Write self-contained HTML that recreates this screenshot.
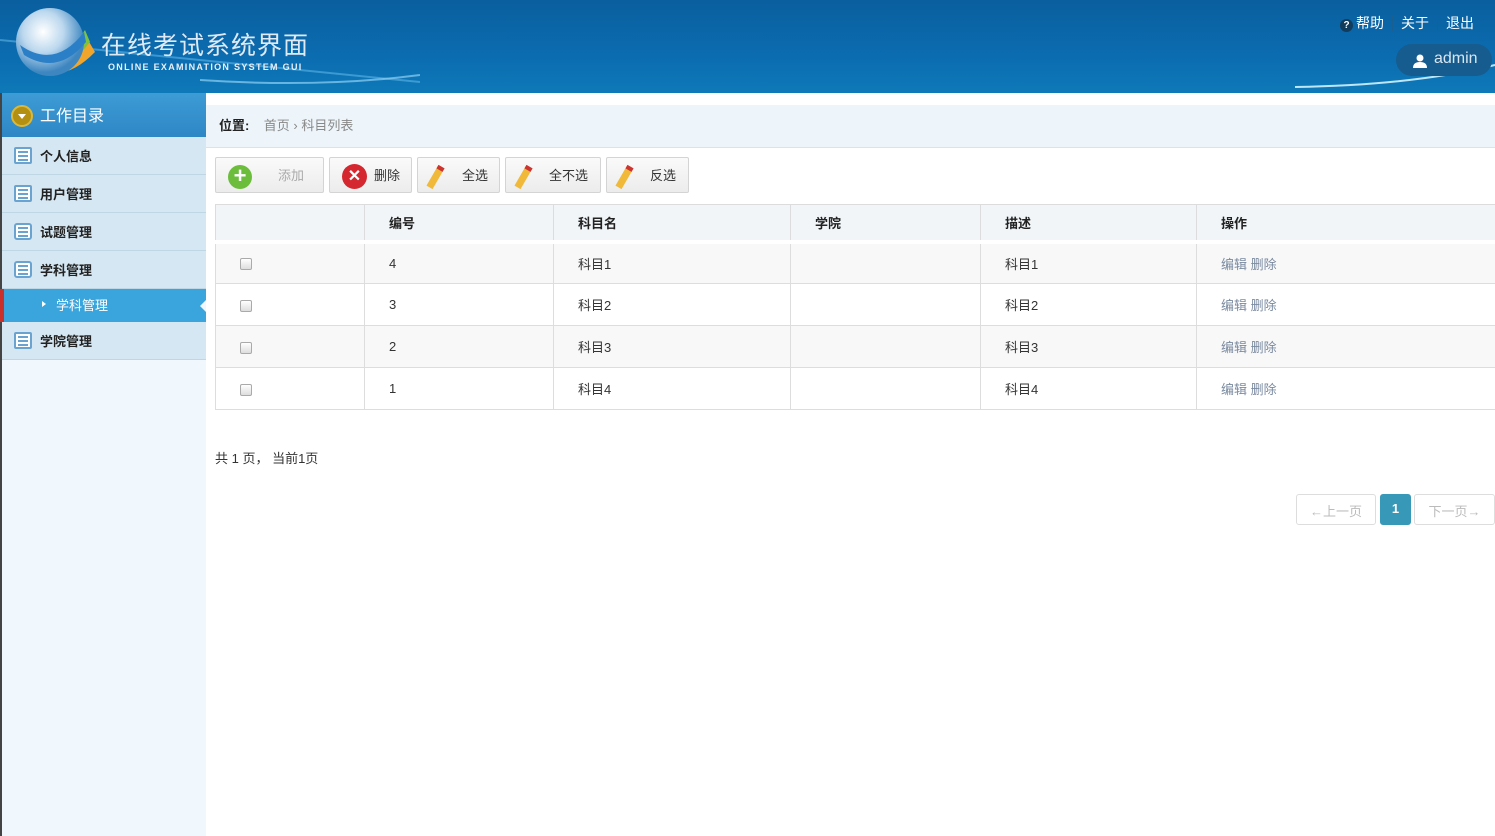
<!DOCTYPE html>
<html><head><meta charset="utf-8"><style>
*{margin:0;padding:0;box-sizing:border-box}
body{width:1495px;height:836px;overflow:hidden;font-family:"Liberation Sans","Noto Sans CJK SC",sans-serif;font-size:13px;color:#333;background:#fff;position:relative}
.hd{position:absolute;left:0;top:0;width:1495px;height:93px;background:linear-gradient(180deg,#0a5f9e 0%,#0b6cb0 60%,#0e79b8 100%);overflow:hidden}
.title{position:absolute;left:101px;top:26px;color:#dfeaf5;font-size:25px;letter-spacing:1px}
.sub{position:absolute;left:108px;top:62px;color:#e8f0f8;font-size:9px;font-weight:bold;letter-spacing:1.3px;font-family:"Liberation Sans",sans-serif}
.top{position:absolute;right:13px;top:13px;color:#fff;font-size:14px}
.top span{padding:0 8px;border-left:1px solid #1a5f90}
.top span:first-child{border:none}
.admin{position:absolute;left:1396px;top:44px;width:96px;height:32px;border-radius:16px;background:#165c8e;color:#d8e6f2;font-size:16px;padding:6px 0 0 38px}
.sb{position:absolute;left:0;top:93px;width:206px;height:743px;background:#f0f8fd;border-left:2px solid #444}
.sbh{height:44px;background:linear-gradient(#3d9bd5,#2e87c5);color:#fff;font-size:16px;padding:9px 0 0 38px;position:relative}
.it{height:38px;background:#d5e7f2;border-bottom:1px solid #bfd6e5;font-weight:bold;font-size:13px;padding:9px 0 0 38px;position:relative;color:#222}
.ic{position:absolute;left:12px;top:10px;width:18px;height:17px;border:2px solid #6aa3cf;border-radius:2px;background:#fff}
.ic:after{content:"";position:absolute;left:2px;top:2px;width:10px;height:2px;background:#6aa3cf;box-shadow:0 4px 0 #6aa3cf,0 8px 0 #6aa3cf}
.sel{height:33px;background:#3aa5dd;color:#fff;padding:6px 0 0 52px;font-size:13px;position:relative;border-left:4px solid #c9302c;margin-left:-2px}
.main{position:absolute;left:206px;top:93px;right:0}
.bc{position:absolute;left:0;top:12px;width:1289px;height:43px;background:#edf5fa;border-bottom:1px solid #d8e4ec;padding:10px 0 0 13px;color:#888}
.btn{position:absolute;top:64px;height:36px;border:1px solid #d4d4d4;border-radius:2px;background:linear-gradient(#fafafa,#ececec);font-size:13px;padding:7px 0 0 0}
table{position:absolute;left:9px;top:111px;width:1281px;border-collapse:collapse;font-size:13px}
th{height:37px;background:#f1f5f8;text-align:left;font-weight:bold;padding-left:24px;border:1px solid #dcdcdc;border-bottom:4px solid #fff;color:#222}
td{height:42px;padding-left:24px;border-left:1px solid #ddd;border-bottom:1px solid #ddd}
tr.o td{background:#f8f8f8}
.cb{display:inline-block;width:12px;height:12px;border:1px solid #aaa;border-radius:2px;background:linear-gradient(#fff,#ddd);vertical-align:middle}
.lk{color:#7a8aa0}
.pg{position:absolute;top:401px;height:31px;border:1px solid #ddd;border-radius:3px;color:#bbb;font-size:13px;padding:6px 0 0 0;text-align:center}
</style></head><body>
<div class="hd">
<svg width="420" height="93" style="position:absolute;left:0;top:0">
<defs><radialGradient id="g" cx="40%" cy="35%" r="60%"><stop offset="0" stop-color="#fff"/><stop offset=".5" stop-color="#bcd8ee"/><stop offset="1" stop-color="#3d86c0"/></radialGradient></defs>
<path d="M0 40 Q150 55 420 82" stroke="#5cb4e6" stroke-width="2" fill="none" opacity=".6"/>
<path d="M30 62 Q60 88 95 52 L88 40 Q65 75 30 55Z" fill="#f2a52b"/>
<path d="M25 54 Q60 82 90 42 L85 30 Q60 70 25 45Z" fill="#7dc242"/>
<circle cx="50" cy="42" r="34" fill="url(#g)"/>
<path d="M20 45 Q55 70 84 32 L86 42 Q58 76 24 55Z" fill="#2a7fc6"/>
<path d="M200 80 Q320 88 420 75" stroke="#8fd0f3" stroke-width="2" fill="none" opacity=".7"/>
</svg>
<div class="title">在线考试系统界面</div>
<div class="sub">ONLINE EXAMINATION SYSTEM GUI</div>
<svg width="200" height="40" style="position:absolute;right:0;top:55px"><path d="M0 32 Q120 30 200 10" stroke="#bde6fa" stroke-width="2" fill="none"/></svg>
<div class="top"><span><b style="display:inline-block;width:13px;height:13px;border-radius:50%;background:#123c5c;font-size:10px;text-align:center;line-height:13px;margin-right:3px">?</b>帮助</span><span>关于</span><span>退出</span></div>
<div class="admin"><svg width="14" height="14" style="position:absolute;left:17px;top:10px"><circle cx="7" cy="4" r="3.5" fill="#fff"/><path d="M0 14 Q0 8 7 8 Q14 8 14 14Z" fill="#fff"/></svg>admin</div>
</div>
<div class="sb">
<div class="sbh"><span style="position:absolute;left:9px;top:12px;width:22px;height:22px;border-radius:50%;background:#b38f12;border:2px solid #d9b83a"><span style="position:absolute;left:5px;top:7px;border:4px solid transparent;border-top:5px solid #fff"></span></span>工作目录</div>
<div class="it"><span class="ic"></span>个人信息</div>
<div class="it"><span class="ic"></span>用户管理</div>
<div class="it"><span class="ic" style="border-radius:3px"></span>试题管理</div>
<div class="it"><span class="ic" style="border-radius:3px"></span>学科管理</div>
<div class="sel"><span style="position:absolute;left:38px;top:12px;border:3px solid transparent;border-left:4px solid #fff"></span>学科管理<span style="position:absolute;right:0;top:11px;border:6px solid transparent;border-right:6px solid #f0f8fd"></span></div>
<div class="it"><span class="ic"></span>学院管理</div>
</div>
<div class="main">
<div class="bc"><b style="color:#222">位置:</b>&nbsp;&nbsp;&nbsp;&nbsp;首页 › 科目列表</div>
<div class="btn" style="left:9px;width:109px;color:#aaa"><span style="position:absolute;left:12px;top:7px;width:24px;height:24px;border-radius:50%;background:#6cbd3c;color:#fff;font-weight:bold;font-size:22px;line-height:22px;text-align:center">+</span><span style="margin-left:62px">添加</span></div>
<div class="btn" style="left:123px;width:83px"><span style="position:absolute;left:12px;top:6px;width:25px;height:25px;border-radius:50%;background:#d5272f;color:#fff;font-weight:bold;font-size:16px;line-height:25px;text-align:center">✕</span><span style="margin-left:44px">删除</span></div>
<div class="btn" style="left:211px;width:83px"><span style="position:absolute;left:14px;top:7px;width:7px;height:24px;background:#f0b93a;transform:rotate(30deg);border-top:4px solid #c33"></span><span style="margin-left:44px">全选</span></div>
<div class="btn" style="left:299px;width:96px"><span style="position:absolute;left:14px;top:7px;width:7px;height:24px;background:#f0b93a;transform:rotate(30deg);border-top:4px solid #c33"></span><span style="margin-left:43px">全不选</span></div>
<div class="btn" style="left:400px;width:83px"><span style="position:absolute;left:14px;top:7px;width:7px;height:24px;background:#f0b93a;transform:rotate(30deg);border-top:4px solid #c33"></span><span style="margin-left:43px">反选</span></div>
<table>
<tr><th style="width:149px"></th><th style="width:189px">编号</th><th style="width:237px">科目名</th><th style="width:190px">学院</th><th style="width:216px">描述</th><th>操作</th></tr>
<tr class="o"><td><span class="cb"></span></td><td>4</td><td>科目1</td><td></td><td>科目1</td><td class="lk">编辑 删除</td></tr>
<tr><td><span class="cb"></span></td><td>3</td><td>科目2</td><td></td><td>科目2</td><td class="lk">编辑 删除</td></tr>
<tr class="o"><td><span class="cb"></span></td><td>2</td><td>科目3</td><td></td><td>科目3</td><td class="lk">编辑 删除</td></tr>
<tr><td><span class="cb"></span></td><td>1</td><td>科目4</td><td></td><td>科目4</td><td class="lk">编辑 删除</td></tr>
</table>
<div style="position:absolute;left:9px;top:355px">共 1 页， 当前1页</div>
<div class="pg" style="left:1090px;width:80px">←上一页</div>
<div class="pg" style="left:1174px;width:31px;background:#3898b8;border-color:#3898b8;color:#fff;font-weight:bold">1</div>
<div class="pg" style="left:1208px;width:81px">下一页→</div>
</div>
</body></html>
